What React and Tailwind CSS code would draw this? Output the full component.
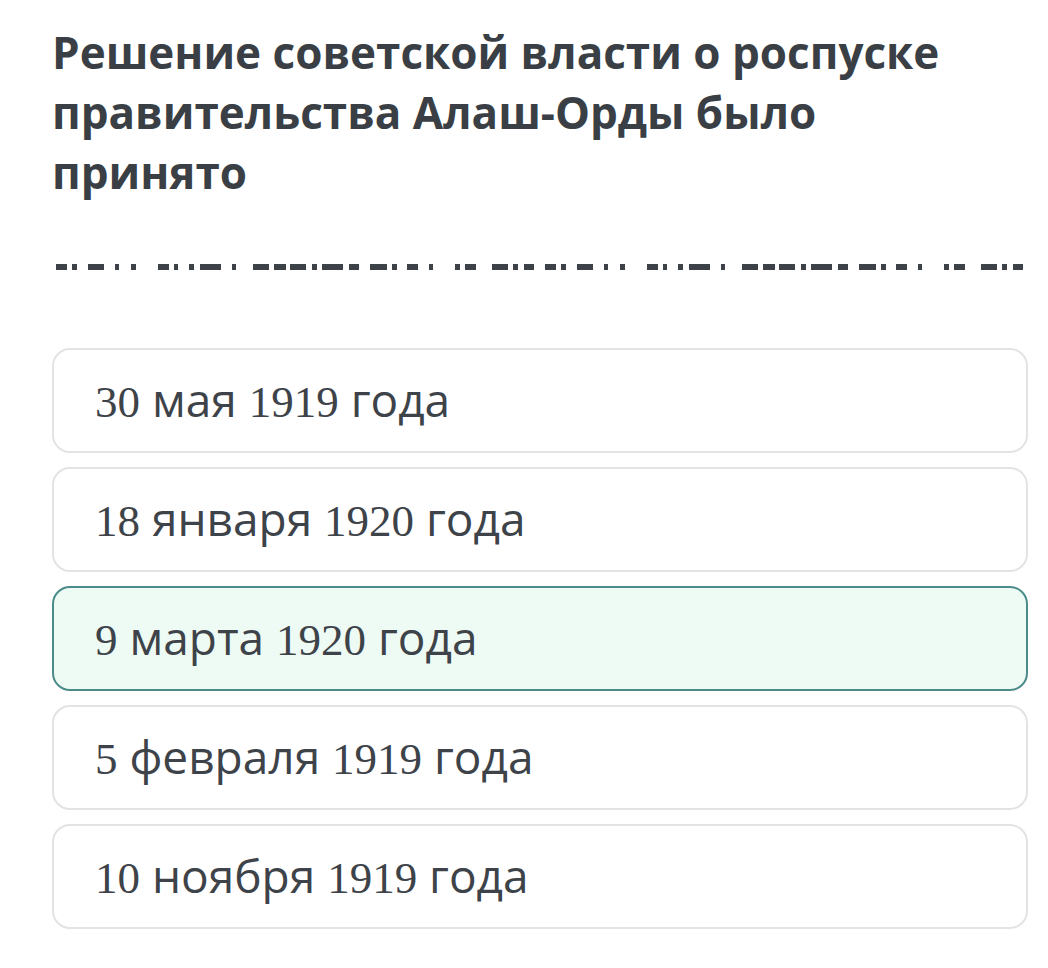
import React from 'react';

// gap-fill blank rendered as a broken dashed rule; the same run repeats twice
const DASH_RUN = [
  [0, 11], [16, 21], [32, 48], [59, 63], [75, 80], [102, 113], [118, 122], [133, 138],
  [144, 165], [176, 180], [197, 213], [218, 230], [234, 250], [256, 261], [266, 287],
  [293, 303], [314, 331], [336, 341], [351, 362], [373, 377], [399, 404], [409, 420],
  [436, 452], [457, 462], [468, 478],
];

const OPTIONS = [
  { day: '30', month: 'мая', year: '1919' },
  { day: '18', month: 'января', year: '1920' },
  { day: '9', month: 'марта', year: '1920', selected: true },
  { day: '5', month: 'февраля', year: '1919' },
  { day: '10', month: 'ноября', year: '1919' },
];

function BlankLine() {
  const starts = [4, 493];
  return (
    <svg width="976" height="6" viewBox="0 0 976 6" className="block">
      {starts.map((s) =>
        DASH_RUN.map(([a, b], i) => (
          <rect key={`${s}-${i}`} x={s + a} y="0" width={b - a} height="6" fill="#3d4248" />
        ))
      )}
    </svg>
  );
}

function Num({ children }) {
  return (
    <span className="text-[45px]" style={{ fontFamily: '"Liberation Serif", "DejaVu Serif", serif' }}>
      {children}
    </span>
  );
}

export default function App() {
  return (
    <div className="min-h-screen bg-white pl-[52px] pr-[20px] pt-[22px]" style={{ fontFamily: '"Open Sans", "Noto Sans", sans-serif' }}>
      <h1 className="max-w-[930px] text-[44px] leading-[60px] font-bold text-[#3a3f46]">
        Решение советской власти о роспуске правительства Алаш-Орды было принято
      </h1>

      <div className="mt-[62px]">
        <BlankLine />
      </div>

      <div className="mt-[78px] flex flex-col gap-[14px]">
        {OPTIONS.map((o) => (
          <div
            key={o.day + o.month}
            className={`flex h-[105px] items-center rounded-[18px] border-2 pl-[41px] text-[46px] text-[#3d4349] ${
              o.selected ? 'border-[#4b8c8a] bg-[#eefaf4]' : 'border-[#e3e3e3] bg-white'
            }`}
          >
            <span>
              <Num>{o.day}</Num> {o.month} <Num>{o.year}</Num> года
            </span>
          </div>
        ))}
      </div>
    </div>
  );
}
